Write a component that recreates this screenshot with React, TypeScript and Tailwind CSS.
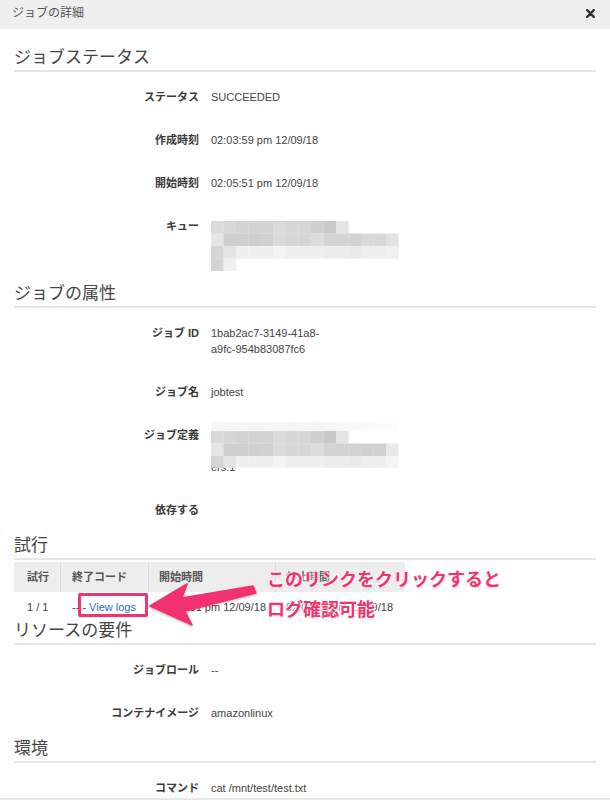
import React from "react";

const FONT = "font-['Liberation_Sans','Noto_Sans_CJK_JP',sans-serif]";
const JP = "font-['Noto_Sans_CJK_JP','Liberation_Sans',sans-serif]";

type Row = string[];

const mosaicA: Row[] = [
  ["#dcdcdc", "#d8d8d8", "#d3d3d3", "#d3d3d3", "#d3d3d3", "#dadada", "#d6d6d6", "#d6d6d6", "#cfcfcf", "#c9c9c9", "#e4e4e4"],
  ["#e5e5e5", "#cfcfcf", "#cfcfcf", "#cfcfcf", "#d1d1d1", "#dadada", "#d6d6d6", "#d6d6d6", "#dcdcdc", "#d3d3d3", "#d3d3d3", "#d3d3d3", "#d8d8d8", "#d8d8d8", "#e2e2e2"],
  ["#d5d5d5", "#e4e4e4", "#efefef", "#efefef", "#efefef", "#f4f4f4", "#efefef", "#efefef", "#efefef", "#ececec", "#ececec", "#eaeaea", "#eeeeee", "#eeeeee", "#f0f0f0"],
  ["#d4d4d4", "#eef0f4"],
];

const mosaicB: Row[] = [
  ["#f7f7f7", "#f6f6f6", "#f6f6f6", "#f5f5f5", "#f6f6f6", "#f6f6f6", "#f5f5f5", "#f6f6f6", "#f4f4f4", "#f6f6f6", "#f8f8f8", "#f9f9f9", "#fafafa", "#fbfbfb", "#fcfcfc"],
  ["#dadada", "#d6d6d6", "#d3d3d3", "#d3d3d3", "#d3d3d3", "#dadada", "#d6d6d6", "#d6d6d6", "#cfcfcf", "#c8c8c8", "#e4e4e4"],
  ["#e5e5e5", "#cfcfcf", "#cfcfcf", "#cfcfcf", "#d1d1d1", "#dadada", "#d6d6d6", "#d6d6d6", "#dcdcdc", "#d3d3d3", "#d3d3d3", "#d3d3d3", "#d0d0d0", "#d0d0d0", "#eaeaea"],
  ["#d5d5d5", "#e4e4e4", "#efefef", "#efefef", "#efefef", "#f4f4f4", "#efefef", "#efefef", "#efefef", "#ececec", "#ececec", "#eaeaea", "#eeeeee", "#eeeeee", "#f4f4f4"],
];

function Mosaic({ rows, heights }: { rows: Row[]; heights: number[] }) {
  const cw = 12.5;
  let y = 0;
  const rects: React.ReactNode[] = [];
  rows.forEach((r, ri) => {
    const h = heights[ri];
    r.forEach((c, ci) => {
      rects.push(<rect key={ri + "-" + ci} x={ci * cw} y={y} width={cw + 0.2} height={h + 0.2} fill={c} />);
    });
    y += h;
  });
  return (
    <svg width={15 * cw} height={y} viewBox={`0 0 ${15 * cw} ${y}`} className="block">
      {rects}
    </svg>
  );
}

function Heading({ children, className = "" }: { children: React.ReactNode; className?: string }) {
  return (
    <h2 className={`${JP} text-[17px] leading-[28px] text-[#444] border-b-2 border-[#e6e6e6] ${className}`}>
      {children}
    </h2>
  );
}

function Field({ label, children }: { label: string; children?: React.ReactNode }) {
  return (
    <div className="grid grid-cols-[185px_1fr] gap-x-[12px] text-[11px] leading-[16px] text-[#444]">
      <div className="text-right font-bold text-[#3a3a3a]">{label}</div>
      <div>{children}</div>
    </div>
  );
}

function Fields({ children }: { children: React.ReactNode }) {
  return <div className="pt-[17px] pb-[12px] flex flex-col gap-[27px]">{children}</div>;
}

const HALO =
  "[text-shadow:0_0_2px_#fff,0_0_3px_#fff,0_0_3px_#fff,0_0_4px_#fff,0_1px_2px_rgba(0,0,0,0.3)]";

export default function App() {
  return (
    <div className={`${FONT} w-[610px] h-[800px] bg-white relative overflow-hidden`}>
      {/* header */}
      <div className="h-[29px] bg-[#efefef] flex items-start justify-between pl-[12px] pr-[15px]">
        <div className={`${JP} text-[12px] leading-[16px] pt-[4px] text-[#555]`}>ジョブの詳細</div>
        <svg width="9" height="9" viewBox="0 0 9 9" className="mt-[9px]">
          <path d="M1.2 1.2 L7.8 7.8 M7.8 1.2 L1.2 7.8" stroke="#333" strokeWidth="2.4" strokeLinecap="round" />
        </svg>
      </div>

      <div className="px-[14px]">
        <Heading className="mt-[13px]">ジョブステータス</Heading>
        <Fields>
          <Field label="ステータス">SUCCEEDED</Field>
          <Field label="作成時刻">02:03:59 pm 12/09/18</Field>
          <Field label="開始時刻">02:05:51 pm 12/09/18</Field>
          <Field label="キュー">
            <div className="relative h-[48px]">
              <div className="absolute left-0 top-[3px]">
                <Mosaic rows={mosaicA} heights={[12.5, 12.5, 12.5, 12.5]} />
              </div>
            </div>
          </Field>
        </Fields>

        <Heading>ジョブの属性</Heading>
        <Fields>
          <Field label="ジョブ ID">
            1bab2ac7-3149-41a8-
            <br />
            a9fc-954b83087fc6
          </Field>
          <Field label="ジョブ名">jobtest</Field>
          <Field label="ジョブ定義">
            <div className="relative">
              <div>&nbsp;</div>
              <div>&nbsp;</div>
              <div>ers:1</div>
              <div className="absolute left-0 top-[-5px]">
                <Mosaic rows={mosaicB} heights={[9, 12.5, 12.5, 11.5]} />
              </div>
            </div>
          </Field>
          <Field label="依存する"></Field>
        </Fields>

        <Heading>試行</Heading>
        <div className="mt-[2px] w-[391px] text-[11px] text-[#444]">
          <div className="grid grid-cols-[46px_88px_127px_130px] bg-[#ededed] h-[30px] leading-[30px] font-bold text-[#555]">
            <div className="pl-[13px]">試行</div>
            <div className="pl-[11px] border-l border-[#dcdcdc]">終了コード</div>
            <div className="pl-[10px] border-l border-[#dcdcdc]">開始時間</div>
            <div className="pl-[10px] border-l border-[#dcdcdc]">停止時間</div>
          </div>
          <div className="grid grid-cols-[46px_88px_127px_130px] leading-[16px] pt-[7px]">
            <div className="pl-[13px]">1 / 1</div>
            <div className="pl-[12px] whitespace-nowrap">
              -- - <span className="text-[#1f6fc5]">View logs</span>
            </div>
            <div className="pl-[11px] whitespace-nowrap">02:05:51 pm 12/09/18</div>
            <div className="pl-[11px] whitespace-nowrap">02:06:21 pm 12/09/18</div>
          </div>
        </div>

        <Heading>リソースの要件</Heading>
        <Fields>
          <Field label="ジョブロール">--</Field>
          <Field label="コンテナイメージ">amazonlinux</Field>
        </Fields>

        <Heading>環境</Heading>
        <Fields>
          <Field label="コマンド">cat /mnt/test/test.txt</Field>
        </Fields>
      </div>

      <div className="absolute left-0 right-0 bottom-0 h-[2px] bg-[#e8e8e8]" />

      {/* annotation overlays */}
      <div className="absolute left-[78px] top-[593px] w-[70px] h-[24px] border-[3px] border-[#f2336e] rounded-[2px]" />
      <svg className="absolute left-0 top-0" width="610" height="800" viewBox="0 0 610 800">
        <defs>
          <filter id="sh" x="-20%" y="-20%" width="140%" height="140%">
            <feDropShadow dx="0" dy="1" stdDeviation="1" floodColor="#000" floodOpacity="0.25" />
          </filter>
        </defs>
        <polygon
          points="150,606 187,584 182,598 253,586 256,593 185,611 192,625"
          fill="#f2336e"
          stroke="#f2336e"
          strokeWidth="1.5"
          strokeLinejoin="round"
          filter="url(#sh)"
        />
      </svg>
      <div
        className={`${JP} absolute left-[267px] top-[565px] text-[18px] leading-[26px] font-bold text-[#f2336e] whitespace-nowrap ${HALO}`}
      >
        このリンクをクリックすると
      </div>
      <div
        className={`${JP} absolute left-[267px] top-[595px] text-[18px] leading-[26px] font-bold text-[#f2336e] whitespace-nowrap ${HALO}`}
      >
        ログ確認可能
      </div>
    </div>
  );
}
